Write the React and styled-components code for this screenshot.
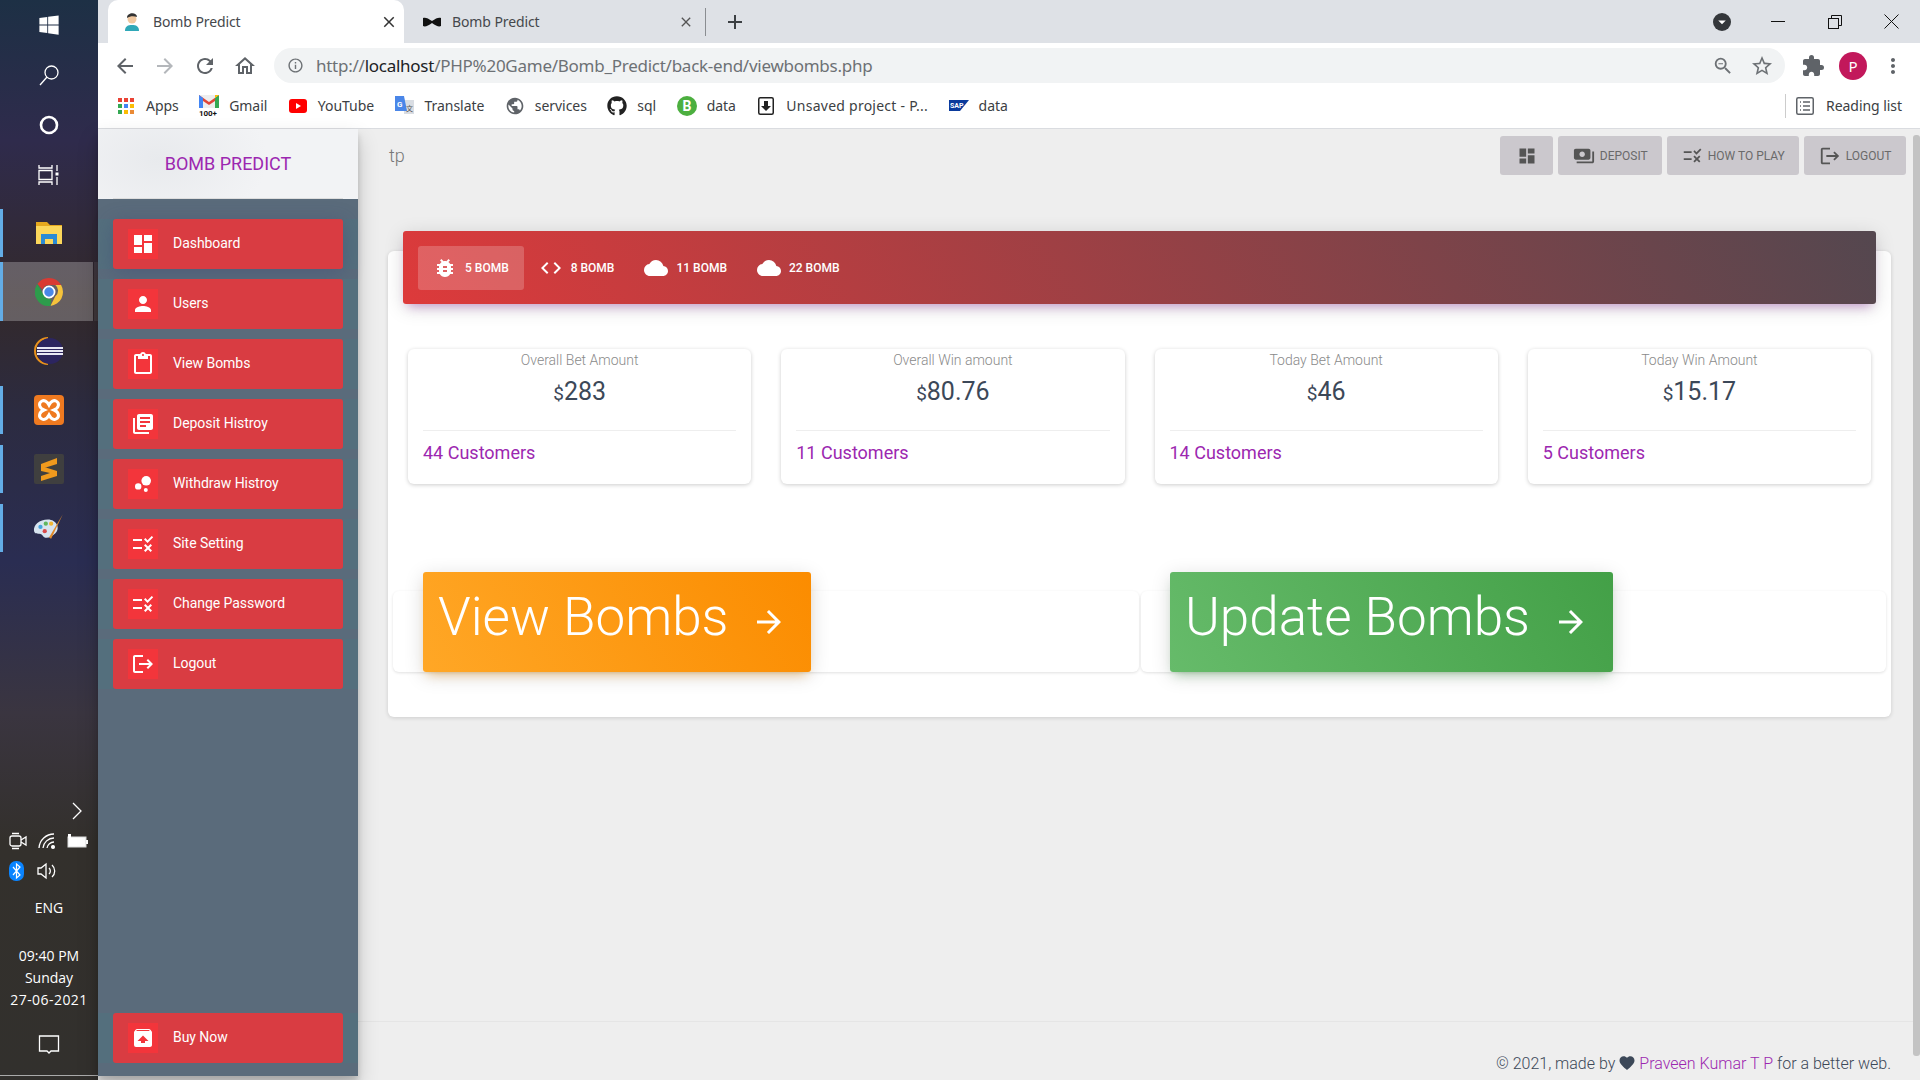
import React from "react";
import styled, { createGlobalStyle } from "styled-components";
import {
  MdDashboard, MdPerson, MdContentPaste, MdLibraryBooks, MdBubbleChart, MdRule, MdLogout, MdUnarchive,
  MdBugReport, MdCode, MdCloud, MdPayments, MdArrowForward, MdFavorite, MdClose, MdAdd, MdArrowBack,
  MdRefresh, MdOutlineHome, MdInfoOutline, MdZoomOut, MdStarBorder, MdExtension, MdMoreVert, MdPublic,
  MdArrowDropDown,
} from "react-icons/md";
import { FaWindows, FaGithub } from "react-icons/fa";

const Global = createGlobalStyle`
  html, body { margin: 0; padding: 0; height: 100%; overflow: hidden; }
  body { font-family: Roboto, "Liberation Sans", sans-serif; background: #eee; }
  * { box-sizing: border-box; }
`;

const Desktop = styled.div`display: flex; width: 1920px; height: 1080px; overflow: hidden;`;
const Taskbar = styled.aside`
  width: 98px; flex: none; height: 1080px; display: flex; flex-direction: column; color: #fff;
  font-family: "Open Sans", sans-serif;
  background: linear-gradient(180deg, #1d3045 0%, #2f2b4c 13%, #33292b 28%, #2c2b40 38%, #2a2d52 52%, #3a3540 66%, #33302c 78%, #32302d 100%);
`;
const TaskTop = styled.div`height: 50px; display: flex; align-items: center; justify-content: center;`;
const TaskApp = styled.div`
  height: 59px; display: flex; align-items: center; justify-content: center; position: relative;
  background: ${p => (p.$active ? "linear-gradient(90deg, rgba(255,255,255,.25) 93px, rgba(0,0,0,.1) 93px, rgba(0,0,0,.1) 94px, rgba(255,255,255,.07) 94px)" : "transparent")};
  &::before {
    content: ""; position: absolute; left: 0; width: 3px; background: #63ade6;
    display: ${p => (p.$open ? "block" : "none")};
    top: ${p => (p.$active ? "0" : "6px")}; bottom: ${p => (p.$active ? "0" : "5px")};
  }
`;
const TaskGap = styled.div`height: 3px;`;
const TraySpacer = styled.div`flex: 1;`;
const Chevron = styled.div`height: 30px; display: flex; justify-content: flex-end; align-items: center; padding-right: 15px;`;
const TrayRow = styled.div`display: flex; justify-content: space-between; align-items: center; height: 30px; padding: 0 10px 0 9px;`;
const TrayRowTight = styled(TrayRow)`justify-content: flex-start; gap: 13px;`;
const Lang = styled.div`font-size: 14px; text-align: center; margin-top: 11px; line-height: 22px;`;
const Clock = styled.div`font-size: 14px; line-height: 22px; text-align: center; margin-top: 26px;`;
const DateLine = styled.span`letter-spacing: .45px;`;
const Notify = styled.div`display: flex; justify-content: center; margin: 23px 0 19px;`;
const TaskEnd = styled.div`height: 1px; background: #aaa; margin-bottom: 4px;`;

const Right = styled.div`flex: 1; min-width: 0; display: flex; flex-direction: column;`;
const TabStrip = styled.div`height: 43px; background: #dee1e6; display: flex; align-items: center; padding-left: 10px; color: #45484c;`;
const Tab = styled.div`
  width: ${p => (p.$active ? "296px" : "302px")}; height: 43px; display: flex; align-items: center;
  padding: ${p => (p.$active ? "0 6px 0 16px" : "0 12px 0 19px")}; gap: ${p => (p.$active ? "13px" : "11px")};
  background: ${p => (p.$active ? "#fff" : "transparent")}; border-radius: 10px 10px 0 0;
  font: 14px "Noto Sans", "Open Sans", sans-serif; letter-spacing: -.1px;
`;
const TabTitle = styled.span`flex: 1; white-space: nowrap;`;
const TabSep = styled.div`width: 1px; height: 28px; background: #8a8d91; margin-left: -1px;`;
const NewTab = styled.div`margin-left: 17px; display: flex;`;
const WinControls = styled.div`margin-left: auto; display: flex; align-items: center; color: #111;`;
const DropBadge = styled.div`width: 18px; height: 18px; border-radius: 50%; background: #34373b; display: flex; align-items: center; justify-content: center; margin-right: 18px;`;
const WinBtn = styled.div`width: 57px; display: flex; justify-content: center;`;

const Toolbar = styled.div`height: 40px; background: #fff; display: flex; align-items: center; padding: 5px 0 0 15px; color: #5f6368;`;
const NavIcons = styled.div`display: flex; align-items: center; gap: 16px; margin-right: 17px;`;
const NavIcon = styled.span`display: flex; color: ${p => (p.$dim ? "#b4b7bb" : "#5f6368")};`;
const Address = styled.div`
  width: 1511px; height: 35px; border-radius: 18px; background: #f1f3f4; display: flex; align-items: center; padding: 0 11px 0 13px;
  font: 17px "Noto Sans", "Open Sans", sans-serif; letter-spacing: -.26px; color: #6d7175; gap: 12px;
`;
const Url = styled.span`flex: 1; white-space: nowrap;`;
const UrlHost = styled.b`font-weight: 400; color: #202124;`;
const AddrIcons = styled.div`display: flex; gap: 16px; align-items: center;`;
const Avatar = styled.div`width: 28px; height: 28px; border-radius: 50%; background: #c2185b; color: #fff; display: flex; align-items: center; justify-content: center; font: 15px "Noto Sans", sans-serif; margin: 0 14px;`;
const ToolEnd = styled.div`display: flex; align-items: center; margin-left: 16px;`;

const Bookmarks = styled.div`
  height: 46px; background: #fff; border-bottom: 1px solid #dadce0; display: flex; align-items: center; padding-left: 18px;
  font: 14px "Noto Sans", "Open Sans", sans-serif; color: #3c4043; letter-spacing: -.05px;
`;
const Mark = styled.div`display: flex; align-items: center; gap: 10px; margin-right: 20.5px; white-space: nowrap; letter-spacing: ${p => p.$spacing || "inherit"};`;
const MarkIcon = styled.span`width: 20px; display: flex; justify-content: center; flex: none;`;
const ReadingList = styled.div`margin-left: auto; display: flex; align-items: center; gap: 12px; padding: 0 18px 0 10px; border-left: 1px solid #ccc; height: 24px;`;

const Page = styled.div`flex: 1; display: flex; min-height: 0; background: #eee; position: relative;`;
const Sidebar = styled.nav`
  width: 260px; height: 947px; flex: none; background: #5a6b7b; display: flex; flex-direction: column;
  box-shadow: 0 10px 20px rgba(0,0,0,.19), 0 6px 6px rgba(0,0,0,.16); position: relative; z-index: 2;
`;
const Logo = styled.div`
  height: 70px; flex: none; background: radial-gradient(ellipse 110px 70px at 60px 30px, #e8eaed 0, #f2f3f5 100%); display: flex; align-items: center; justify-content: center;
  color: #9c27b0; font-size: 18px; padding-bottom: 1px;
`;
const LogoRule = styled.div`height: 1px; background: #ddd; margin: -1px 15px 0; position: relative; z-index: 1;`;
const MenuList = styled.div`display: flex; flex-direction: column; gap: 10px; padding-top: 20px; flex: 1;`;
const MenuRow = styled.div`background: #546f7d; padding: 0 15px; ${p => p.$bottom && "margin-top: auto; margin-bottom: 13px;"}`;
const MenuItem = styled.a`
  height: 50px; display: flex; align-items: center; background: #d93c42; border-radius: 3px; color: #fff; font-size: 14px; padding: 0 0 2px 15px; gap: 15px; letter-spacing: -.05px;
  box-shadow: ${p => (p.$active ? "0 4px 20px rgba(60,70,120,.4)" : "none")};
`;
const MenuIcon = styled.span`width: 30px; height: 30px; background: #f3353b; display: flex; align-items: center; justify-content: center; margin-top: 2px;`;

const Main = styled.main`flex: 1; min-width: 0; display: flex; flex-direction: column; position: relative;`;
const ScrollThumb = styled.div`position: absolute; right: 0; top: 6px; width: 7px; height: 921px; background: #c3c3c3; border-radius: 3px;`;
const TopNav = styled.header`height: 47px; padding: 7px 14px 0 31px; display: flex; align-items: flex-start; justify-content: space-between;`;
const PageTitle = styled.div`font-size: 18px; font-weight: 300; color: #777; line-height: 40px;`;
const NavButtons = styled.div`display: flex; gap: 5px;`;
const NavButton = styled.div`
  height: 39px; padding: ${p => (p.$square ? "0 16.5px" : "0 14.5px")}; background: #cbc8cd; border-radius: 3px; display: flex; align-items: center; gap: 5px;
  font-size: 12px; color: #6a6a6a;
`;
const Card = styled.section`
  margin: 75px 29px 0 30px; height: 466px; background: #fff; border-radius: 6px; box-shadow: 0 1px 4px rgba(0,0,0,.14);
`;
const CardHeader = styled.div`
  margin: -20px 15px 0; height: 73px; padding: 15px; border-radius: 3px; display: flex; position: relative;
  background: linear-gradient(60deg, #dd3a3b, #54474f);
  box-shadow: 0 4px 20px rgba(0,0,0,.14), 0 7px 10px -5px rgba(156,39,176,.4);
`;
const BombTab = styled.div`
  height: 44px; padding: 0 15px; display: flex; align-items: center; gap: 8px; color: #fff; font-size: 12px; font-weight: 500; border-radius: 3px;
  background: ${p => (p.$active ? "rgba(255,255,255,.2)" : "transparent")};
`;
const Stats = styled.div`display: grid; grid-template-columns: repeat(4, 1fr); gap: 30px; padding: 45px 20px 0;`;
const Stat = styled.article`height: 135px; background: #fff; border-radius: 6px; box-shadow: 0 1px 4px rgba(0,0,0,.2); padding: 0 15px; display: flex; flex-direction: column; align-items: center;`;
const StatTitle = styled.div`font-size: 14px; font-weight: 300; color: #8a8a8a; margin-top: 1px; line-height: 20px;`;
const StatValue = styled.div`font-size: 25px; font-weight: 400; color: #3c4858; line-height: 30px; margin-top: 7px; height: 53px;`;
const Dollar = styled.small`font-size: 19px; color: #3c4858;`;
const StatFoot = styled.div`align-self: stretch; border-top: 1px solid #eee; padding-top: 11px; color: #9c27b0; font-size: 18px; line-height: 22px;`;
const Lower = styled.div`display: grid; grid-template-columns: 746px 745px; gap: 2px; padding: 107px 5px 0;`;
const LowerCard = styled.div`height: 81px; background: #fff; border-radius: 6px; box-shadow: 0 1px 3px rgba(0,0,0,.12); padding-left: ${p => p.$pad}px;`;
const BigButton = styled.div`
  display: inline-flex; align-items: center; height: 100px; margin-top: -19px; padding: 0 24px 10px 15px; color: #fff; font-size: 53px; font-weight: 300; border-radius: 3px; position: relative;
  background: ${p => (p.$tone === "orange" ? "linear-gradient(60deg, #ffa726, #fb8c00)" : "linear-gradient(60deg, #66bb6a, #43a047)")};
  box-shadow: 0 4px 20px rgba(0,0,0,.14), 0 7px 10px -5px ${p => (p.$tone === "orange" ? "rgba(255,152,0,.4)" : "rgba(76,175,80,.4)")};
`;
const BigArrow = styled.span`display: flex; margin: 10px 0 0 23px;`;
const Footer = styled.footer`margin-top: auto; height: 59px; border-top: 1px solid #e5e5e5; display: flex; justify-content: flex-end; align-items: center; padding: 24px 29px 0 0; font-size: 16px; font-weight: 300; color: #3c4858; white-space: pre;`;
const FootLink = styled.span`color: #9c27b0;`;
const FootHeart = styled.span`display: inline-flex; margin: 0 3px;`;

const ChromeLogo = () => (
  <svg width="28" height="28" viewBox="4 4 40 40">
    <path d="M24 4a20 20 0 0 1 17.300 10H24a10 10 0 0 0-9.400 6.600L7.400 12.500A20 20 0 0 1 24 4z" fill="#d93a33"/>
    <path d="M41.300 14A20 20 0 0 1 26 43.900L33 30a10 10 0 0 0 0-16z" fill="#f5c33b"/>
    <path d="M26 43.900A20 20 0 0 1 7.400 12.500L15.600 27a10 10 0 0 0 11.500 6.900z" fill="#2d9c4b"/>
    <circle cx="24" cy="24" r="8" fill="#4a88e8" stroke="#fff" strokeWidth="2.500"/>
  </svg>
);
const Folder = () => (
  <svg width="28" height="24" viewBox="0 0 28 24">
    <path d="M1 1h11l3 3h12v4H1z" fill="#e5a81e"/><rect x="1" y="5" width="26" height="18" fill="#fbd75b"/>
    <path d="M6 23V13h16v10h-4v-5h-8v5z" fill="#2a8bd5"/>
  </svg>
);
const Eclipse = () => (
  <svg width="30" height="28" viewBox="0 0 30 28">
    <path d="M14 1a13 13 0 0 0 0 26" fill="none" stroke="#e8911c" strokeWidth="2"/>
    <circle cx="16" cy="14" r="13" fill="#2c2560"/>
    <rect x="3" y="10" width="26" height="2" fill="#e8e8f4"/><rect x="3" y="13" width="26" height="2" fill="#e8e8f4"/><rect x="3" y="16" width="26" height="2" fill="#e8e8f4"/>
  </svg>
);
const Xampp = () => (
  <svg width="30" height="30" viewBox="0 0 30 30">
    <rect width="30" height="30" rx="4" fill="#ef7a20"/>
    <path d="M15 10C13 6 10 5 8 6 4 8 5 13 10 15 5 17 4 22 8 24c2 1 5 0 7-4 2 4 5 5 7 4 4-2 3-7-2-9 5-2 6-7 2-9-2-1-5 0-7 4z" fill="none" stroke="#fff" strokeWidth="3"/>
  </svg>
);
const Sublime = () => (
  <svg width="30" height="30" viewBox="0 0 30 30">
    <rect width="30" height="30" rx="2" fill="#3f3f3f"/>
    <path d="M23 5v6L7 16v-5zM7 13l16 5v5L7 28v-5l9-3-9-2z" fill="#f09a1d" transform="translate(0 -1)"/>
  </svg>
);
const Paint = () => (
  <svg width="32" height="32" viewBox="0 0 30 30">
    <path d="M14 7C6 7 0 12 1 18c1 4 6 1 8 4 2 4 8 2 12-2 5-5 1-13-7-13z" fill="#d7e4ef"/>
    <circle cx="7" cy="14" r="2" fill="#46a3dd"/><circle cx="12" cy="11" r="2" fill="#5fb75f"/><circle cx="17" cy="11" r="2" fill="#f2b632"/><circle cx="11" cy="18" r="2" fill="#d94c4c"/>
    <path d="M28 2l-11 23-2-1z" fill="#e08a2a"/>
  </svg>
);
const Avatarish = () => (
  <svg width="16" height="18" viewBox="0 0 16 18">
    <circle cx="8" cy="6" r="4.500" fill="#f0c8a0"/><path d="M3 5c0-6 10-6 10-1-3-1-7-1-10 1z" fill="#333"/><path d="M1 18c0-5 3-6 7-6s7 1 7 6z" fill="#2fa8b8"/>
  </svg>
);
const BowTie = () => (
  <svg width="18" height="10" viewBox="0 0 18 10"><path d="M0 1c2-1 5 0 9 3 4-3 7-4 9-3v8c-2 1-5 0-9-3-4 3-7 4-9 3z" fill="#111"/></svg>
);
const AppsGrid = () => (
  <svg width="16" height="16" viewBox="0 0 16 16">
    {[["#ea4335", "#ea4335", "#ea4335"], ["#34a853", "#4285f4", "#fbbc05"], ["#34a853", "#fbbc05", "#ea8a35"]].map((r, y) =>
      r.map((c, x) => <rect key={`${x}${y}`} x={x * 6} y={y * 6} width="4" height="4" fill={c} />))}
  </svg>
);
const Gmail = () => (
  <svg width="20" height="22" viewBox="0 0 20 22">
    <rect x="0" y="0" width="20" height="13" fill="#eee"/><path d="M0 0l10 7 10-7v13h-4V6l-6 4-6-4v7H0z" fill="#e0463a"/>
    <path d="M0 0v13h4V3z" fill="#4285f4"/><path d="M20 0v13h-4V3z" fill="#34a853"/><path d="M20 0l-4 3V0z" fill="#fbbc05"/>
    <text x="0" y="21" fontSize="8" fontWeight="700" fontFamily="Roboto, sans-serif" fill="#111">100+</text>
  </svg>
);
const Youtube = () => (
  <svg width="18" height="14" viewBox="0 0 18 14"><rect width="18" height="14" rx="3" fill="#f00"/><path d="M7 4l5 3-5 3z" fill="#fff"/></svg>
);
const Translate = () => (
  <svg width="19" height="20" viewBox="0 0 19 20">
    <path d="M9 4h10v14H9z" fill="#d9dde3"/><path d="M0 0h9l3 15H0z" fill="#4a86e8"/>
    <text x="2" y="11" fontSize="8" fontWeight="700" fontFamily="Roboto, sans-serif" fill="#fff">G</text>
    <text x="11" y="15" fontSize="7" fontFamily="'Noto Sans CJK SC', sans-serif" fill="#555">文</text>
  </svg>
);
const GreenB = () => (
  <svg width="20" height="20" viewBox="0 0 20 20"><circle cx="10" cy="10" r="10" fill="#4caf3f"/><text x="10" y="15" textAnchor="middle" fontSize="14" fontWeight="700" fontFamily="Roboto, sans-serif" fill="#fff">B</text></svg>
);
const Unsaved = () => (
  <svg width="16" height="18" viewBox="0 0 16 18"><rect x=".75" y=".75" width="14.500" height="16.500" rx="1.500" fill="#fff" stroke="#222" strokeWidth="1.500"/><path d="M6 4h4v5h3l-5 5-5-5h3z" fill="#222"/></svg>
);
const Sap = () => (
  <svg width="20" height="11" viewBox="0 0 20 11"><path d="M0 0h20l-9 11H0z" fill="#0a3a9c"/><text x="1" y="8" fontSize="7" fontWeight="700" fontFamily="Roboto, sans-serif" fill="#fff">SAP</text></svg>
);
const ReadingIcon = () => (
  <svg width="18" height="18" viewBox="0 0 18 18" fill="none" stroke="#5f6368" strokeWidth="1.500">
    <rect x=".75" y=".75" width="16.500" height="16.500" rx="1.500"/><path d="M7 5h7M7 9h7M7 13h7M4 5h1M4 9h1M4 13h1"/>
  </svg>
);
const TLine = ({ children, w = 24, h = 24, vb = "0 0 24 24" }) => (
  <svg width={w} height={h} viewBox={vb} fill="none" stroke="#fff" strokeWidth="1.300">{children}</svg>
);

const menu = [
  ["Dashboard", MdDashboard], ["Users", MdPerson], ["View Bombs", MdContentPaste], ["Deposit Histroy", MdLibraryBooks],
  ["Withdraw Histroy", MdBubbleChart], ["Site Setting", MdRule], ["Change Password", MdRule], ["Logout", MdLogout],
];
const stats = [
  ["Overall Bet Amount", "283", "44 Customers"], ["Overall Win amount", "80.76", "11 Customers"],
  ["Today Bet Amount", "46", "14 Customers"], ["Today Win Amount", "15.17", "5 Customers"],
];
const bombs = [["5 BOMB", MdBugReport, true], ["8 BOMB", MdCode], ["11 BOMB", MdCloud], ["22 BOMB", MdCloud]];

export default function App() {
  return (
    <Desktop>
      <Global />
      <Taskbar>
        <TaskTop><FaWindows size={22} /></TaskTop>
        <TaskTop><TLine><circle cx="14.500" cy="9.500" r="6.500"/><path d="M10 14l-7 8"/></TLine></TaskTop>
        <TaskTop><svg width="20" height="20" viewBox="0 0 20 20" fill="none" stroke="#fff" strokeWidth="2.600"><circle cx="10" cy="10" r="8"/></svg></TaskTop>
        <TaskTop><TLine><path d="M2 2v3h13V2M2 22v-3h13v3M2 7.500h13v9H2zM20 2v6M20 14v8"/><rect x="18.500" y="9.500" width="3" height="3" fill="#fff" stroke="none"/></TLine></TaskTop>
        <TaskGap />
        <TaskApp $open><Folder /></TaskApp>
        <TaskApp $open $active><ChromeLogo /></TaskApp>
        <TaskApp><Eclipse /></TaskApp>
        <TaskApp $open><Xampp /></TaskApp>
        <TaskApp $open><Sublime /></TaskApp>
        <TaskApp $open><Paint /></TaskApp>
        <TraySpacer />
        <Chevron><TLine w={12} h={18} vb="0 0 12 18"><path d="M2 1l8 8-8 8"/></TLine></Chevron>
        <TrayRow>
          <TLine w={18} h={18} vb="0 0 18 18"><rect x="1" y="4" width="11" height="10" rx="2"/><path d="M12 8l5-3v8l-5-3M3 1.500h7M3 16.500h7"/></TLine>
          <TLine w={18} h={18} vb="0 0 18 18"><path d="M1 16A15 15 0 0 1 16 2M5 16A11 11 0 0 1 16 6M9 16a7 7 0 0 1 7-6"/><circle cx="15" cy="15" r="1.400" fill="#fff"/></TLine>
          <svg width="21" height="14" viewBox="0 0 21 14"><rect x="1" y="3" width="18" height="10" fill="#fff" stroke="#ddd"/><rect x="19" y="6" width="2" height="4" fill="#fff"/><rect x="1" y="0" width="3" height="4" fill="#fff"/></svg>
        </TrayRow>
        <TrayRowTight>
          <svg width="15" height="20" viewBox="0 0 15 20"><rect width="15" height="20" rx="7" fill="#0a84ff"/><path d="M4 6l7 8-3.500 3V3L11 6l-7 8" fill="none" stroke="#fff" strokeWidth="1.200"/></svg>
          <TLine w={20} h={18} vb="0 0 20 18"><path d="M1 6h3l5-4v14l-5-4H1zM12 6a4 4 0 0 1 0 6M15 3a8 8 0 0 1 0 12"/></TLine>
        </TrayRowTight>
        <Lang>ENG</Lang>
        <Clock>09:40 PM<br />Sunday<br /><DateLine>27-06-2021</DateLine></Clock>
        <Notify><TLine w={22} h={22} vb="0 0 22 22"><path d="M1.500 2h19v15H13l-2 2-2-2H1.500z"/></TLine></Notify>
        <TaskEnd />
      </Taskbar>

      <Right>
        <TabStrip>
          <Tab $active><Avatarish /><TabTitle>Bomb Predict</TabTitle><MdClose size={18} color="#333" /></Tab>
          <Tab><BowTie /><TabTitle>Bomb Predict</TabTitle><MdClose size={16} color="#555" /></Tab>
          <TabSep />
          <NewTab><MdAdd size={24} color="#3c4043" /></NewTab>
          <WinControls>
            <DropBadge><MdArrowDropDown size={18} color="#fff" /></DropBadge>
            <WinBtn><svg width="14" height="2"><rect width="14" height="1" fill="#111" /></svg></WinBtn>
            <WinBtn><svg width="14" height="14" viewBox="0 0 14 14" fill="none" stroke="#111"><rect x=".5" y="3.500" width="10" height="10" /><path d="M3.500 3.500v-3h10v10h-3" /></svg></WinBtn>
            <WinBtn><svg width="15" height="15" viewBox="0 0 15 15" stroke="#111"><path d="M.5.5l14 14M14.500.5l-14 14" /></svg></WinBtn>
          </WinControls>
        </TabStrip>
        <Toolbar>
          <NavIcons>
            <NavIcon><MdArrowBack size={24} /></NavIcon>
            <NavIcon $dim><MdArrowBack size={24} style={{ transform: "scaleX(-1)" }} /></NavIcon>
            <NavIcon><MdRefresh size={24} /></NavIcon>
            <NavIcon><MdOutlineHome size={24} /></NavIcon>
          </NavIcons>
          <Address>
            <MdInfoOutline size={17} />
            <Url>http://<UrlHost>localhost</UrlHost>/PHP%20Game/Bomb_Predict/back-end/viewbombs.php</Url>
            <AddrIcons><MdZoomOut size={22} /><MdStarBorder size={24} /></AddrIcons>
          </Address>
          <ToolEnd>
            <MdExtension size={24} color="#5f6368" />
            <Avatar>P</Avatar>
            <MdMoreVert size={24} color="#5f6368" />
          </ToolEnd>
        </Toolbar>
        <Bookmarks>
          <Mark><MarkIcon><AppsGrid /></MarkIcon>Apps</Mark>
          <Mark><MarkIcon><Gmail /></MarkIcon>Gmail</Mark>
          <Mark><MarkIcon><Youtube /></MarkIcon>YouTube</Mark>
          <Mark><MarkIcon><Translate /></MarkIcon>Translate</Mark>
          <Mark><MarkIcon><MdPublic size={20} color="#5f6368" /></MarkIcon>services</Mark>
          <Mark><MarkIcon><FaGithub size={20} color="#222" /></MarkIcon>sql</Mark>
          <Mark><MarkIcon><GreenB /></MarkIcon>data</Mark>
          <Mark $spacing=".25px"><MarkIcon><Unsaved /></MarkIcon>Unsaved project - P...</Mark>
          <Mark><MarkIcon><Sap /></MarkIcon>data</Mark>
          <ReadingList><ReadingIcon />Reading list</ReadingList>
        </Bookmarks>
        <Page>
          <Sidebar>
            <Logo>BOMB PREDICT</Logo>
            <LogoRule />
            <MenuList>
              {menu.map(([label, Icon], i) => (
                <MenuRow key={label}>
                  <MenuItem $active={i === 0}><MenuIcon><Icon size={24} color="#fff" /></MenuIcon>{label}</MenuItem>
                </MenuRow>
              ))}
              <MenuRow $bottom>
                <MenuItem><MenuIcon><MdUnarchive size={24} color="#fff" /></MenuIcon>Buy Now</MenuItem>
              </MenuRow>
            </MenuList>
          </Sidebar>
          <Main>
            <ScrollThumb />
            <TopNav>
              <PageTitle>tp</PageTitle>
              <NavButtons>
                <NavButton $square><MdDashboard size={20} color="#555" /></NavButton>
                <NavButton><MdPayments size={22} color="#555" />DEPOSIT</NavButton>
                <NavButton><MdRule size={21} color="#555" />HOW TO PLAY</NavButton>
                <NavButton><MdLogout size={22} color="#555" />LOGOUT</NavButton>
              </NavButtons>
            </TopNav>
            <Card>
              <CardHeader>
                {bombs.map(([label, Icon, active]) => (
                  <BombTab key={label} $active={active}><Icon size={24} color="#fff" />{label}</BombTab>
                ))}
              </CardHeader>
              <Stats>
                {stats.map(([title, value, foot]) => (
                  <Stat key={title}>
                    <StatTitle>{title}</StatTitle>
                    <StatValue><Dollar>$</Dollar>{value}</StatValue>
                    <StatFoot>{foot}</StatFoot>
                  </Stat>
                ))}
              </Stats>
              <Lower>
                <LowerCard $pad={30}>
                  <BigButton $tone="orange">View Bombs<BigArrow><MdArrowForward size={36} /></BigArrow></BigButton>
                </LowerCard>
                <LowerCard $pad={29}>
                  <BigButton $tone="green">Update Bombs<BigArrow><MdArrowForward size={36} /></BigArrow></BigButton>
                </LowerCard>
              </Lower>
            </Card>
            <Footer>
              © 2021, made by<FootHeart><MdFavorite size={18} color="#3c4858" /></FootHeart><FootLink>Praveen Kumar T P</FootLink> for a better web.
            </Footer>
          </Main>
        </Page>
      </Right>
    </Desktop>
  );
}
